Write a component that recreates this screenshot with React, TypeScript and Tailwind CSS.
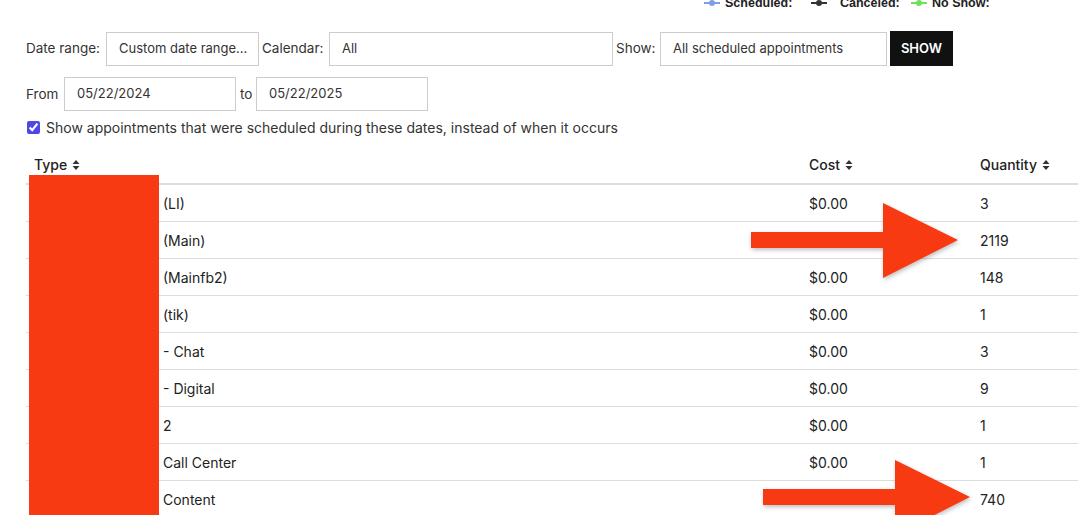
import React from 'react';

const font = { fontFamily: 'Inter, "Noto Sans", Arial, sans-serif' };

const SortIcon: React.FC = () => (
  <svg width="8" height="10" viewBox="0 0 8 10" className="inline-block ml-[5px] -mt-[2px]">
    <path d="M4 0 L7.5 4 L0.5 4 Z" fill="#333" />
    <path d="M4 10 L7.5 6 L0.5 6 Z" fill="#333" />
  </svg>
);

const LegendMark: React.FC<{ color: string }> = ({ color }) => (
  <svg width="16" height="8" viewBox="0 0 16 8" className="shrink-0">
    <line x1="0" y1="4" x2="16" y2="4" stroke={color} strokeWidth="2" />
    <circle cx="8" cy="4" r="3" fill={color} />
  </svg>
);

const Arrow: React.FC<{ className: string }> = ({ className }) => (
  <svg
    className={className}
    width="210"
    height="76"
    viewBox="0 0 210 76"
    style={{ filter: 'drop-shadow(1px 2px 2px rgba(0,0,0,0.25))' }}
  >
    <path d="M0 29 L132 29 L132 0 L207 37 L132 75 L132 45 L0 45 Z" fill="#f83a12" />
  </svg>
);

const Field: React.FC<{ w: string; children: React.ReactNode }> = ({ w, children }) => (
  <div className={`${w} h-[34px] border border-[#ccc] flex items-center pl-[12px] text-[13px] shrink-0`}>
    {children}
  </div>
);

export default function App() {
  const rows = [
    { type: '(LI)', cost: '$0.00', qty: '3' },
    { type: '(Main)', cost: '', qty: '2119' },
    { type: '(Mainfb2)', cost: '$0.00', qty: '148' },
    { type: '(tik)', cost: '$0.00', qty: '1' },
    { type: '- Chat', cost: '$0.00', qty: '3' },
    { type: '- Digital', cost: '$0.00', qty: '9' },
    { type: '2', cost: '$0.00', qty: '1' },
    { type: 'Call Center', cost: '$0.00', qty: '1' },
    { type: 'Content', cost: '', qty: '740' },
  ];

  return (
    <div className="relative w-[1078px] h-[515px] overflow-hidden bg-white text-[#222]" style={font}>
      {/* Legend (scrolled partly out of view) */}
      <div
        className="flex items-center h-[20px] -mt-[7px] pl-[704px] text-[12.5px] font-bold text-[#222]"
        style={{ fontFamily: '"Liberation Sans", Arial, sans-serif' }}
      >
        <div className="flex items-center w-[107px]">
          <LegendMark color="#7d9fe6" />
          <span className="ml-[5px]">Scheduled:</span>
        </div>
        <div className="flex items-center w-[100px]">
          <LegendMark color="#333" />
          <span className="ml-[13px]">Canceled:</span>
        </div>
        <div className="flex items-center">
          <LegendMark color="#6fe05b" />
          <span className="ml-[5px]">No Show:</span>
        </div>
      </div>

      <div className="pl-[26px]">
        {/* Filters */}
        <div className="flex items-center mt-[18px] text-[13.5px] text-[#333]">
          <span className="w-[80px] shrink-0">Date range:</span>
          <Field w="w-[153px]">Custom date range...</Field>
          <span className="pl-[3px] w-[70px] shrink-0">Calendar:</span>
          <Field w="w-[284px]">All</Field>
          <span className="pl-[3px] w-[47px] shrink-0">Show:</span>
          <Field w="w-[227px]">All scheduled appointments</Field>
          <button className="ml-[3px] w-[63px] h-[35px] bg-[#111] text-white text-[13px] font-semibold">
            SHOW
          </button>
        </div>

        <div className="flex items-center mt-[11px] text-[13.5px] text-[#333]">
          <span className="w-[38px] shrink-0">From</span>
          <Field w="w-[172px]">05/22/2024</Field>
          <span className="pl-[4px] w-[20px] shrink-0">to</span>
          <Field w="w-[172px]">05/22/2025</Field>
        </div>

        <label className="flex items-center mt-[6px] h-[20px] text-[14px] text-[#333]">
          <input type="checkbox" defaultChecked className="w-[13px] h-[13px] ml-[1px] accent-[#5046e5]" />
          <span className="ml-[6px]">Show appointments that were scheduled during these dates, instead of when it occurs</span>
        </label>

        {/* Table */}
        <div className="mt-[9px] w-[1052px] text-[14px] text-[#222]">
          <div className="flex h-[39px] items-center border-b-2 border-[#ddd] font-medium">
            <div className="pl-[8px] w-[775px]">Type<SortIcon /></div>
            <div className="pl-[8px] w-[171px]">Cost<SortIcon /></div>
            <div className="pl-[8px] flex-1">Quantity<SortIcon /></div>
          </div>
          {rows.map((r, i) => (
            <div key={i} className="flex h-[37px] items-center border-b border-[#ddd]">
              <div className="pl-[137px] w-[775px]">{r.type}</div>
              <div className="pl-[8px] w-[171px]">{r.cost}</div>
              <div className="pl-[8px] flex-1">{r.qty}</div>
            </div>
          ))}
        </div>
      </div>

      {/* Redaction and annotations */}
      <div className="absolute left-[29px] top-[175px] w-[130px] h-[360px] bg-[#f83a12]" />
      <Arrow className="absolute left-[751px] top-[203px]" />
      <Arrow className="absolute left-[763px] top-[460px]" />
    </div>
  );
}
